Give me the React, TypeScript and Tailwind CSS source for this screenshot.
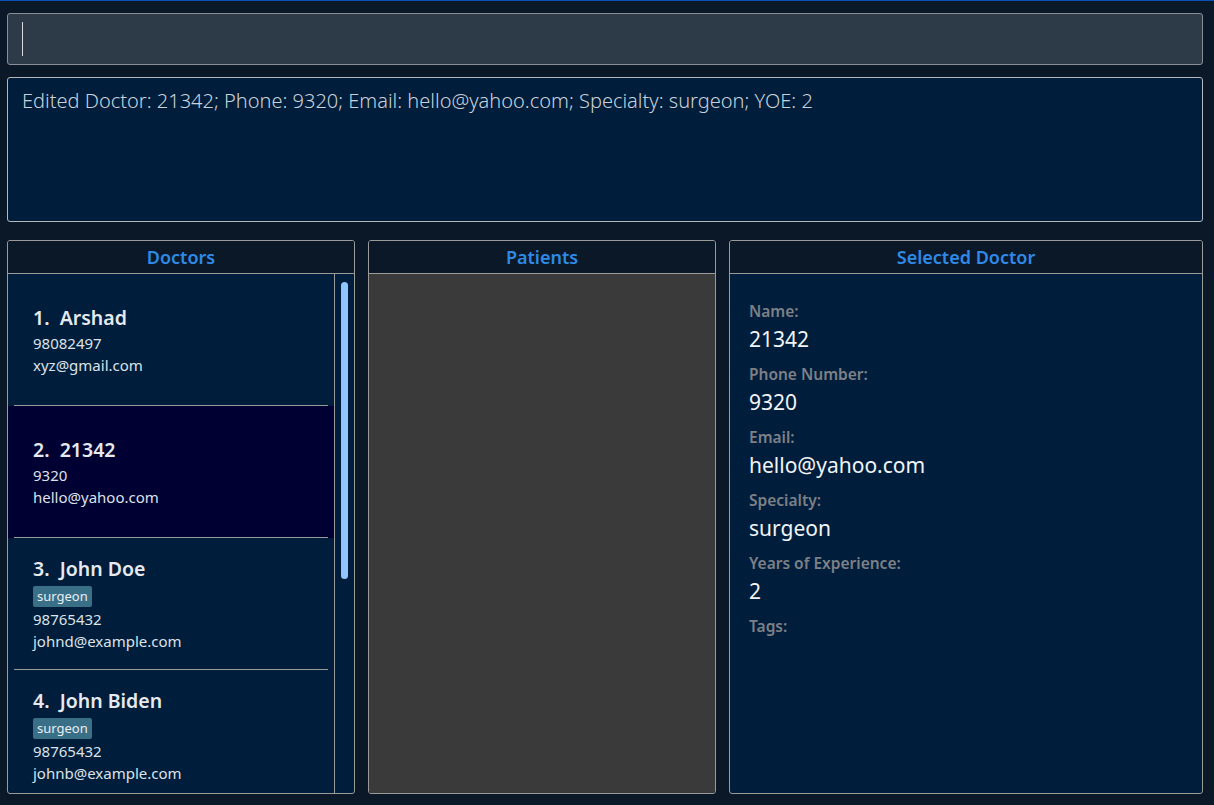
const font = { fontFamily: '"Noto Sans", "Open Sans", sans-serif' };

interface Doctor {
  name: string;
  phone: string;
  email: string;
  tags: string[];
}

const doctors: Doctor[] = [
  { name: "Arshad", phone: "98082497", email: "xyz@gmail.com", tags: [] },
  { name: "21342", phone: "9320", email: "hello@yahoo.com", tags: [] },
  { name: "John Doe", phone: "98765432", email: "johnd@example.com", tags: ["surgeon"] },
  { name: "John Biden", phone: "98765432", email: "johnb@example.com", tags: ["surgeon"] },
];

const details = [
  { label: "Name:", value: "21342" },
  { label: "Phone Number:", value: "9320" },
  { label: "Email:", value: "hello@yahoo.com" },
  { label: "Specialty:", value: "surgeon" },
  { label: "Years of Experience:", value: "2" },
];

function PanelHeader({ title }: { title: string }) {
  return (
    <div className="h-[33px] shrink-0 flex items-center justify-center border-b border-[#9a9a9a] bg-[#0b1828]">
      <span className="text-[18px] font-semibold text-[#2e8ae6] leading-none">{title}</span>
    </div>
  );
}

function DoctorCard({ doctor, index, selected }: { doctor: Doctor; index: number; selected: boolean }) {
  return (
    <div className={`h-[132px] shrink-0 flex flex-col ${selected ? "bg-[#000033]" : ""}`}>
      <div className="flex-1 flex flex-col justify-center pl-[25px] pt-[2px]">
        <div className="text-[19.5px] font-semibold text-[#e6e9ee] leading-[24px] mb-[2px]">
          {index + 1}.&nbsp;&nbsp;{doctor.name}
        </div>
        {doctor.tags.length > 0 && (
          <div className="flex gap-1 mt-[3px] mb-[1px]">
            {doctor.tags.map((t) => (
              <span key={t} className="bg-[#3a6f88] text-[#e8eef2] text-[13px] leading-[21px] px-[4px] rounded-[2px]">
                {t}
              </span>
            ))}
          </div>
        )}
        <div className="text-[15px] text-[#dde2e8] leading-[22px]">{doctor.phone}</div>
        <div className="text-[15px] text-[#dde2e8] leading-[22px]">{doctor.email}</div>
      </div>
      <div className="h-px mx-[6px] bg-[#9a9a9a]" />
    </div>
  );
}

export default function App() {
  return (
    <div
      className="w-[1214px] h-[805px] bg-[#0b1828] border-t border-[#0a52b8] flex flex-col pl-[7px] pr-[11px] pt-[12px] pb-[11px] overflow-hidden"
      style={font}
    >
      {/* command box */}
      <div className="h-[52px] shrink-0 bg-[#2d3a47] border border-[#8a8f96] rounded-[3px] flex items-center pl-[14px]">
        <div className="w-px h-[34px] bg-[#d8d8d8]" />
      </div>

      {/* result box */}
      <div className="h-[145px] shrink-0 mt-[12px] bg-[#001e3c] border border-[#b4b8bd] rounded-[3px] px-[14px] pt-[9px]">
        <p className="text-[20px] font-light text-[#c9d1da] leading-[28px]">
          Edited Doctor: 21342; Phone: 9320; Email: hello@yahoo.com; Specialty: surgeon; YOE: 2
        </p>
      </div>

      {/* panels */}
      <div className="flex-1 mt-[18px] flex gap-[13px] min-h-0">
        {/* doctors */}
        <div className="w-[348px] shrink-0 flex flex-col border border-[#9a9a9a] rounded-[3px] overflow-hidden bg-[#001e3c]">
          <PanelHeader title="Doctors" />
          <div className="flex-1 flex min-h-0">
            <div className="flex-1 flex flex-col overflow-hidden">
              {doctors.map((d, i) => (
                <DoctorCard key={d.email} doctor={d} index={i} selected={i === 1} />
              ))}
            </div>
            <div className="w-[20px] shrink-0 border-l border-[#9a9a9a] pt-[8px] flex justify-center">
              <div className="w-[7px] h-[297px] rounded-full bg-[#90c6ff]" />
            </div>
          </div>
        </div>

        {/* patients */}
        <div className="w-[348px] shrink-0 flex flex-col border border-[#9a9a9a] rounded-[3px] overflow-hidden">
          <PanelHeader title="Patients" />
          <div className="flex-1 bg-[#3a3a3a]" />
        </div>

        {/* selected doctor */}
        <div className="flex-1 flex flex-col border border-[#9a9a9a] rounded-[3px] overflow-hidden bg-[#001e3c]">
          <PanelHeader title="Selected Doctor" />
          <div className="flex-1 pl-[19px] pt-[26px] flex flex-col">
            {details.map((d) => (
              <div key={d.label} className="h-[63px] flex flex-col">
                <div className="text-[15.5px] font-semibold text-[#7d8086] leading-[22px]">{d.label}</div>
                <div className="text-[21px] text-[#f2f4f7] leading-[35px]">{d.value}</div>
              </div>
            ))}
            <div className="text-[15.5px] font-semibold text-[#7d8086] leading-[22px]">Tags:</div>
          </div>
        </div>
      </div>
    </div>
  );
}
